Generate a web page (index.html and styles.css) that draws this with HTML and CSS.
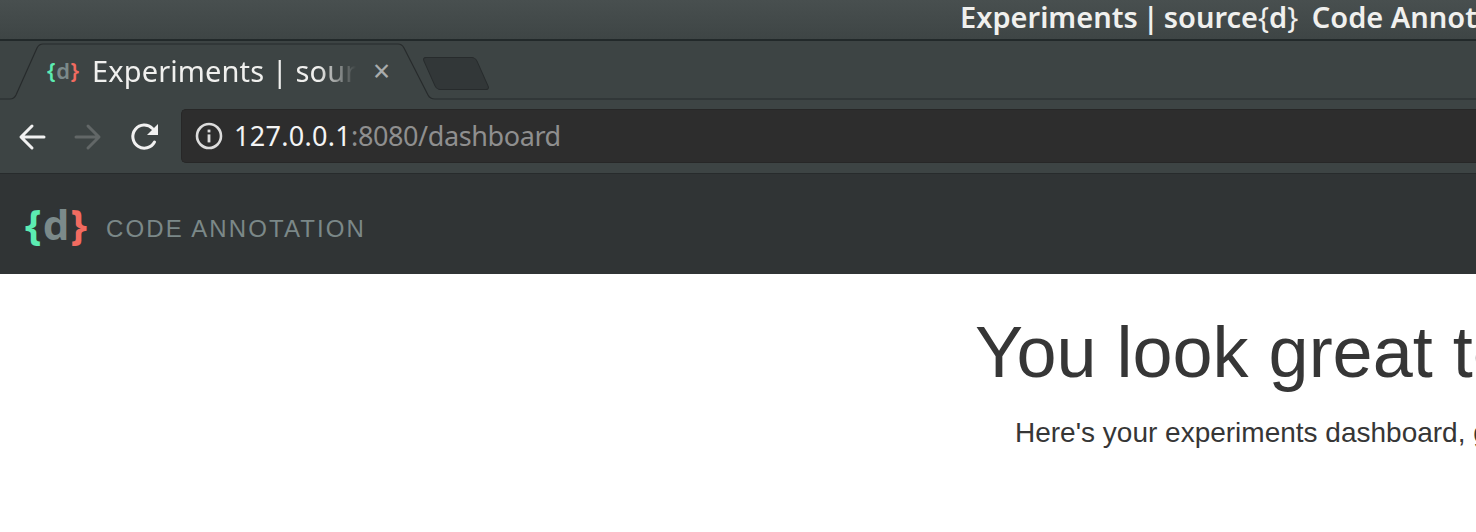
FILE: index.html
```html
<!DOCTYPE html>
<html lang="en">
<head>
  <meta charset="UTF-8" />
  <title>Experiments | source{d} Code Annotation</title>
  <link rel="stylesheet" href="styles.css">
</head>
<body>

  <!-- WINDOW TITLE -->
  <div class="titlebar">Experiments <span class="pipe">|</span> source<span class="thin">{</span>d<span class="thin brace-end">}</span> Code Annotation</div>

  <!-- TABS -->
  <div class="tabstrip">
    <svg class="tabshape" width="1476" height="59" viewBox="0 0 1476 59">
      <path d="M0 58 H10 Q14 58 16 54 L37 7 Q39 3 43 3 H398 Q402 3 404 7 L428 54 Q430 58 435 58 H1476" fill="none" stroke="#272b2c" stroke-width="1.2"/>
    </svg>
    <div class="tab">
      <span class="favicon"><span class="green">{</span><span class="gray">d</span><span class="red">}</span></span>
      <span class="tabtitle">Experiments | sour</span>
      <span class="tabclose">×</span>
    </div>
    <div class="newtab"></div>
  </div>

  <!-- TOOLBAR -->
  <div class="toolbar">
    <svg class="navicon" width="30" height="30" viewBox="0 0 30 30">
      <path d="M27 15 H5 M15 4 L4 15 L15 26" fill="none" stroke="#f1f1f1" stroke-width="3" stroke-linecap="round" stroke-linejoin="round"/>
    </svg>
    <svg class="navicon" width="30" height="30" viewBox="0 0 30 30">
      <path d="M3 15 H25 M15 4 L26 15 L15 26" fill="none" stroke="#626767" stroke-width="3" stroke-linecap="round" stroke-linejoin="round"/>
    </svg>
    <svg class="navicon reload" width="30" height="30" viewBox="0 0 30 30">
      <path d="M24.5 20 A11.5 11.5 0 1 1 22.5 6.5" fill="none" stroke="#f1f1f1" stroke-width="3" stroke-linecap="round"/>
      <path d="M28 2 V13 H17 Z" fill="#f1f1f1"/>
    </svg>
    <div class="omnibox">
      <svg width="28" height="28" viewBox="0 0 28 28">
        <circle cx="14" cy="14" r="12" fill="none" stroke="#dcdcdc" stroke-width="2.6"/>
        <rect x="12.6" y="12.4" width="2.8" height="8" fill="#dcdcdc"/>
        <rect x="12.6" y="7.6" width="2.8" height="2.8" fill="#dcdcdc"/>
      </svg>
      <span class="url"><span class="host">127.0.0.1</span>:8080/dashboard</span>
    </div>
  </div>

  <!-- APP HEADER -->
  <header class="appbar">
    <span class="logo"><span class="green">{</span><span class="gray">d</span><span class="red">}</span></span>
    <span class="appname">CODE ANNOTATION</span>
  </header>

  <!-- CONTENT -->
  <main class="content">
    <h1>You look great today!</h1>
    <p>Here's your experiments dashboard, get going!</p>
  </main>

</body>
</html>
```

FILE: styles.css
```css
html, body {
  margin: 0;
  height: 100%;
  overflow: hidden;
}
body {
  width: 1476px;
  background: #fff;
  font-family: 'Noto Sans', sans-serif;
}
.green { color: #5cecb2; }
.gray { color: #7b8a8a; }
.red { color: #f26b60; }

.titlebar {
  height: 39px;
  line-height: 34px;
  padding-left: 960px;
  background: linear-gradient(to bottom, #484f4f, #3e4545);
  border-bottom: 2px solid #22292a;
  color: #f0f0ee;
  font-size: 29px;
  font-weight: 600;
  white-space: nowrap;
  overflow: hidden;
}
.thin {
  font-weight: 400;
}
.brace-end {
  margin-right: 6px;
}
.pipe {
  margin: 0 -2.5px;
}

.tabstrip {
  position: relative;
  height: 59px;
  display: flex;
  align-items: flex-start;
  background: #3d4444;
}
.tabshape {
  position: absolute;
  left: 0;
  top: 0;
}
.tab {
  position: relative;
  display: flex;
  align-items: center;
  width: 345px;
  height: 58px;
  margin-left: 47px;
  color: #f0f0ee;
}
.favicon {
  width: 45px;
  font-size: 22px;
  font-weight: 600;
  letter-spacing: .6px;
  flex: none;
}
.tabtitle {
  width: 264px;
  flex: none;
  overflow: hidden;
  white-space: nowrap;
  font-size: 29px;
  letter-spacing: .12px;
  -webkit-mask-image: linear-gradient(to right, #000 226px, transparent 264px);
  mask-image: linear-gradient(to right, #000 226px, transparent 264px);
}
.tabclose {
  margin-left: 17px;
  color: #a9acac;
  font-size: 30px;
}
.newtab {
  width: 52px;
  height: 31px;
  margin: 16px 0 0 37px;
  background: #323738;
  border: 1px solid #272b2c;
  border-radius: 4px;
  transform: skewX(24deg);
}

.toolbar {
  height: 73px;
  display: flex;
  align-items: center;
  padding-left: 17px;
  gap: 26px;
  background: #3d4444;
  border-bottom: 1px solid #272b2c;
}
.navicon {
  flex: none;
}
.reload {
  margin-left: 1px;
}
.omnibox {
  flex: 1;
  height: 52px;
  display: flex;
  align-items: center;
  gap: 11px;
  padding-left: 13px;
  margin: 0 0 2px -5px;
  background: #2d2d2d;
  border: 1px solid #272727;
  border-right: 0;
  border-radius: 5px 0 0 5px;
}
.url {
  color: #8f8f8f;
  font-size: 27px;
  letter-spacing: -.4px;
  white-space: nowrap;
}
.host {
  color: #f4f4f4;
  letter-spacing: .3px;
}

.appbar {
  height: 100px;
  display: flex;
  align-items: center;
  padding-left: 25px;
  background: #303435;
}
.logo {
  width: 81px;
  font-size: 42px;
  font-weight: 700;
  line-height: 1;
  letter-spacing: 1.2px;
}
.appname {
  margin-top: 9px;
  color: #7b8888;
  font-family: 'Liberation Sans', sans-serif;
  font-size: 24px;
  letter-spacing: 2.1px;
}

.content {
  padding-left: 975px;
  white-space: nowrap;
  color: #363636;
  font-family: 'Liberation Sans', sans-serif;
}
.content h1 {
  margin: 38px 0 0;
  font-size: 72px;
  font-weight: 400;
  line-height: 80px;
}
.content p {
  margin: 21px 0 0 40px;
  font-size: 28px;
  line-height: 40px;
}
```
